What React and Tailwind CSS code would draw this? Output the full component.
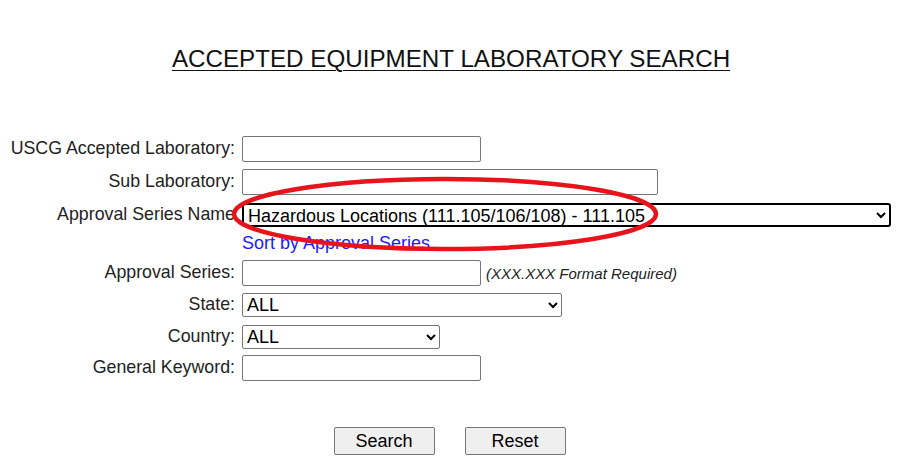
import React from "react";

const font = { fontFamily: '"Liberation Sans", Arial, sans-serif' };

function Label({ children }) {
  return (
    <div className="w-[236px] shrink-0 text-right text-[17.8px] leading-none text-[#222] pr-[1px]">{children}</div>
  );
}

function TextInput({ w }) {
  return (
    <input
      type="text"
      className={`${w} h-[26px] border border-[#767676] rounded-[2px] bg-white px-1 outline-none`}
    />
  );
}

function Select({ w, value, focused }) {
  return (
    <select
      defaultValue={value}
      className={`${w} h-[24px] ${focused ? "border-2 border-black rounded-[3px]" : "border border-[#767676] rounded-[2px]"} bg-white text-[18px] leading-none text-black outline-none`}
      style={font}
    >
      <option>{value}</option>
    </select>
  );
}

export default function App() {
  return (
    <div className="relative w-[902px] h-[463px] bg-white text-black overflow-hidden" style={font}>
      <div className="pt-[41px] flex justify-center">
        <h1 className="text-[24.2px] underline underline-offset-[3px] decoration-1 text-[#111]">
          ACCEPTED EQUIPMENT LABORATORY SEARCH
        </h1>
      </div>

      <div className="mt-[59px] flex flex-col">
        <div className="flex items-center gap-[6px] h-[26px]">
          <Label>USCG Accepted Laboratory:</Label>
          <TextInput w="w-[239px]" />
        </div>
        <div className="flex items-center gap-[6px] h-[26px] mt-[7px]">
          <Label>Sub Laboratory:</Label>
          <TextInput w="w-[416px]" />
        </div>
        <div className="flex items-center gap-[6px] h-[24px] mt-[8px]">
          <Label>Approval Series Name</Label>
          <Select w="w-[649px]" value="Hazardous Locations (111.105/106/108) - 111.105" focused />
        </div>
        <div className="flex items-center gap-[6px] h-[22px] mt-[5px]">
          <Label></Label>
          <a href="#" className="text-[18px] leading-none text-[#1a1aff]">Sort by Approval Series</a>
        </div>
        <div className="flex items-center gap-[6px] h-[26px] mt-[6px]">
          <Label>Approval Series:</Label>
          <TextInput w="w-[239px]" />
          <span className="italic text-[15px] leading-none text-[#222] ml-[-1px]">(XXX.XXX Format Required)</span>
        </div>
        <div className="flex items-center gap-[6px] h-[24px] mt-[7px]">
          <Label>State:</Label>
          <Select w="w-[320px]" value="ALL" />
        </div>
        <div className="flex items-center gap-[6px] h-[24px] mt-[8px]">
          <Label>Country:</Label>
          <Select w="w-[198px]" value="ALL" />
        </div>
        <div className="flex items-center gap-[6px] h-[26px] mt-[6px]">
          <Label>General Keyword:</Label>
          <TextInput w="w-[239px]" />
        </div>
        <div className="flex justify-center gap-[30px] mt-[46px] pr-[3px]">
          <button className="w-[101px] h-[28px] bg-[#efefef] border border-[#767676] rounded-[2px] text-[18px] leading-none text-black">
            Search
          </button>
          <button className="w-[101px] h-[28px] bg-[#efefef] border border-[#767676] rounded-[2px] text-[18px] leading-none text-black">
            Reset
          </button>
        </div>
      </div>

      <svg className="absolute left-0 top-0 pointer-events-none" width="902" height="463">
        <ellipse cx="445" cy="214" rx="211" ry="35" fill="none" stroke="#e8141b" strokeWidth="4.5" />
      </svg>
    </div>
  );
}
